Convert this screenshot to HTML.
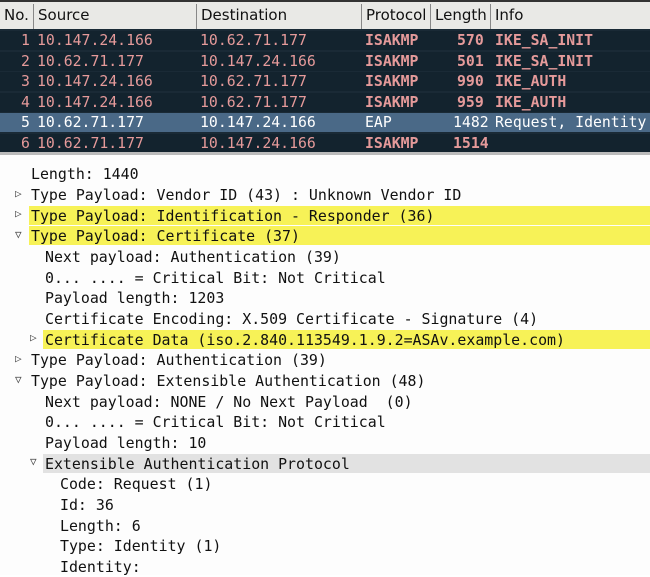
<!DOCTYPE html><html><head><style>
body{margin:0;width:650px;height:576px;overflow:hidden;background:#fff;position:relative;font-family:"DejaVu Sans Mono","Liberation Mono",monospace}
#list{position:absolute;left:0;top:0;width:650px;height:153px;background:#1a2a36;overflow:hidden}
.hdr{position:absolute;left:0;width:650px;height:27px;background:#e9e9e6;border-top:2px solid #333;top:0;font-family:"DejaVu Sans","Liberation Sans",sans-serif;font-size:15px;color:#111}
.hdr span{position:absolute;top:4px}
.hdr i{position:absolute;top:2px;width:1px;height:25px;background:#888}
.row{position:absolute;left:0;width:650px;height:19px;background:#13232e;color:#e59a9a;font-size:14.8px;line-height:19px;white-space:pre}
.row.sel{background:#4a6987;color:#fff}
.row span{position:absolute;top:0}
.row .b{font-weight:bold}
#det{position:absolute;left:0;width:650px;height:420px;background:#fdfdfd;border-top:3px solid #bbb;top:152px}
.l{position:absolute;height:19px;line-height:20px;font-size:14.9px;color:#111;white-space:pre;right:0}
.y{background:#f7f257;padding-left:2px}
.g{background:#e2e2e2;padding-left:2px}
.a{position:absolute;font-size:11px;color:#444}
</style></head><body>
<div id="list">
<div class="hdr"><span style="left:4px">No.</span><i style="left:33px"></i><span style="left:38px">Source</span><i style="left:196px"></i><span style="left:201px">Destination</span><i style="left:361px"></i><span style="left:366px">Protocol</span><i style="left:430px"></i><span style="left:435px">Length</span><i style="left:490px"></i><span style="left:495px">Info</span></div>
<div class="row" style="top:31px"><span style="left:21px">1</span><span style="left:37px">10.147.24.166</span><span style="left:200px">10.62.71.177</span><span class="b" style="left:365px">ISAKMP</span><span class="b" style="left:457px">570</span><span class="b" style="left:495px">IKE_SA_INIT</span></div>
<div class="row" style="top:51.5px"><span style="left:21px">2</span><span style="left:37px">10.62.71.177</span><span style="left:200px">10.147.24.166</span><span class="b" style="left:365px">ISAKMP</span><span class="b" style="left:457px">501</span><span class="b" style="left:495px">IKE_SA_INIT</span></div>
<div class="row" style="top:72px"><span style="left:21px">3</span><span style="left:37px">10.147.24.166</span><span style="left:200px">10.62.71.177</span><span class="b" style="left:365px">ISAKMP</span><span class="b" style="left:457px">990</span><span class="b" style="left:495px">IKE_AUTH</span></div>
<div class="row" style="top:92.5px"><span style="left:21px">4</span><span style="left:37px">10.147.24.166</span><span style="left:200px">10.62.71.177</span><span class="b" style="left:365px">ISAKMP</span><span class="b" style="left:457px">959</span><span class="b" style="left:495px">IKE_AUTH</span></div>
<div class="row sel" style="top:113px"><span style="left:21px">5</span><span style="left:37px">10.62.71.177</span><span style="left:200px">10.147.24.166</span><span style="left:365px">EAP</span><span style="left:453px">1482</span><span style="left:495px">Request, Identity</span></div>
<div class="row" style="top:133.5px"><span style="left:21px">6</span><span style="left:37px">10.62.71.177</span><span style="left:200px">10.147.24.166</span><span class="b" style="left:365px">ISAKMP</span><span class="b" style="left:453px">1514</span></div>
</div>
<div id="det"></div>
<div class="l" style="top:164px;left:31px">Length: 1440</div>
<span class="a" style="left:15px;top:187px">▷</span><div class="l" style="top:185px;left:31px">Type Payload: Vendor ID (43) : Unknown Vendor ID</div>
<span class="a" style="left:15px;top:207px">▷</span><div class="l y" style="top:205.5px;left:29px">Type Payload: Identification - Responder (36)</div>
<span class="a" style="left:15px;top:228px">▽</span><div class="l y" style="top:226px;left:29px">Type Payload: Certificate (37)</div>
<div class="l" style="top:247px;left:45px">Next payload: Authentication (39)</div>
<div class="l" style="top:267.5px;left:45px">0... .... = Critical Bit: Not Critical</div>
<div class="l" style="top:288px;left:45px">Payload length: 1203</div>
<div class="l" style="top:309px;left:45px">Certificate Encoding: X.509 Certificate - Signature (4)</div>
<span class="a" style="left:30px;top:331px">▷</span><div class="l y" style="top:329.5px;left:43px">Certificate Data (iso.2.840.113549.1.9.2=ASAv.example.com)</div>
<span class="a" style="left:15px;top:352px">▷</span><div class="l" style="top:350px;left:31px">Type Payload: Authentication (39)</div>
<span class="a" style="left:15px;top:373px">▽</span><div class="l" style="top:371px;left:31px">Type Payload: Extensible Authentication (48)</div>
<div class="l" style="top:391.5px;left:45px">Next payload: NONE / No Next Payload  (0)</div>
<div class="l" style="top:412px;left:45px">0... .... = Critical Bit: Not Critical</div>
<div class="l" style="top:433px;left:45px">Payload length: 10</div>
<span class="a" style="left:30px;top:455px">▽</span><div class="l g" style="top:453.5px;left:43px">Extensible Authentication Protocol</div>
<div class="l" style="top:474px;left:60px">Code: Request (1)</div>
<div class="l" style="top:495px;left:60px">Id: 36</div>
<div class="l" style="top:515.5px;left:60px">Length: 6</div>
<div class="l" style="top:536px;left:60px">Type: Identity (1)</div>
<div class="l" style="top:557px;left:60px">Identity:</div>
</body></html>
